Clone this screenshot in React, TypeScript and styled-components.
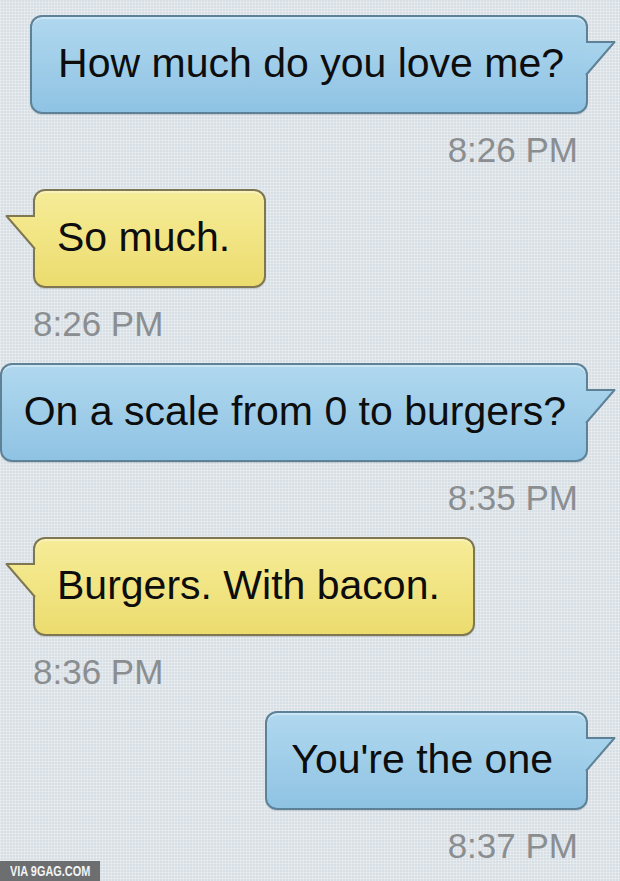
import React from "react";
import styled, { createGlobalStyle, css } from "styled-components";

const Global = createGlobalStyle`
  html, body { margin: 0; padding: 0; }
  body {
    width: 620px;
    height: 881px;
    overflow: hidden;
    background: #d7dfe5;
  }
`;

type Side = "left" | "right";

const palette = {
  right: {
    top: "#b0d8ef",
    bottom: "#8fc3e3",
    border: "#5d8298",
  },
  left: {
    top: "#f6ec98",
    bottom: "#ecdc6e",
    border: "#7f7752",
  },
};

const Screen = styled.div`
  position: relative;
  width: 620px;
  height: 881px;
  box-sizing: border-box;
  padding-top: 15px;
  overflow: hidden;
  font-family: "Liberation Sans", Arial, sans-serif;
  background-color: #d7dfe5;
  background-image:
    linear-gradient(90deg, rgba(255, 255, 255, 0.28) 1px, transparent 1px),
    linear-gradient(0deg, rgba(255, 255, 255, 0.28) 1px, transparent 1px);
  background-size: 3px 3px;
  display: flex;
  flex-direction: column;
`;

const Message = styled.div<{ $side: Side }>`
  display: flex;
  flex-direction: column;
  align-items: ${(p) => (p.$side === "right" ? "flex-end" : "flex-start")};
  padding: ${(p) => (p.$side === "right" ? "0 32px 0 0" : "0 0 0 33px")};
  margin-bottom: 19px;
`;

const Bubble = styled.div<{ $side: Side; $padL: number; $padR: number }>`
  position: relative;
  box-sizing: border-box;
  height: 99px;
  display: flex;
  align-items: center;
  padding: 0 ${(p) => p.$padR}px 3px ${(p) => p.$padL}px;
  border: 2px solid ${(p) => palette[p.$side].border};
  border-radius: 12px;
  background: linear-gradient(
    180deg,
    ${(p) => palette[p.$side].top} 0%,
    ${(p) => palette[p.$side].bottom} 100%
  );
  box-shadow: inset 0 2px 0 rgba(255, 255, 255, 0.35),
    0 1px 1px rgba(0, 0, 0, 0.12);
  color: #0d0d0d;
  font-size: 41px;
  line-height: 1;
  white-space: nowrap;
`;

const Tail = styled.svg<{ $side: Side }>`
  position: absolute;
  top: 22px;
  width: 32px;
  height: 38px;
  overflow: visible;
  ${(p) =>
    p.$side === "right"
      ? css`
          right: -31px;
        `
      : css`
          left: -31px;
          transform: scaleX(-1);
        `}
`;

const Time = styled.div<{ $side: Side }>`
  margin-top: 16px;
  height: 40px;
  line-height: 40px;
  font-size: 35px;
  color: #8b8e91;
  padding-right: ${(p) => (p.$side === "right" ? "10px" : "0")};
`;

const Watermark = styled.div`
  position: absolute;
  left: 0;
  bottom: 0;
  width: 100px;
  height: 20px;
  background: #6c6e70;
  color: #f4f4f4;
  font-family: "Liberation Sans Narrow", "Liberation Sans", Arial, sans-serif;
  font-weight: bold;
  font-size: 14px;
  line-height: 20px;
  white-space: nowrap;
  display: flex;
  align-items: center;
  padding-left: 10px;
  box-sizing: border-box;
`;

const WatermarkText = styled.span`
  display: inline-block;
  transform: scaleX(0.78);
  transform-origin: left center;
`;

function BubbleTail({ side }: { side: Side }) {
  const c = palette[side];
  const gid = `tail-${side}`;
  return (
    <Tail $side={side} viewBox="0 0 32 38">
      <defs>
        <linearGradient id={gid} x1="0" y1="-22" x2="0" y2="77" gradientUnits="userSpaceOnUse">
          <stop offset="0" stopColor={c.top} />
          <stop offset="1" stopColor={c.bottom} />
        </linearGradient>
      </defs>
      <path d="M0 2 H30 L2 36 H0 Z" fill={`url(#${gid})`} />
      <path
        d="M1 3 H29.5 L1 36"
        fill="none"
        stroke={c.border}
        strokeWidth="2"
        strokeLinejoin="round"
      />
    </Tail>
  );
}

type Msg = { side: Side; text: string; time: string; padL: number; padR: number };

const messages: Msg[] = [
  { side: "right", text: "How much do you love me?", time: "8:26 PM", padL: 26, padR: 22 },
  { side: "left", text: "So much.", time: "8:26 PM", padL: 22, padR: 34 },
  { side: "right", text: "On a scale from 0 to burgers?", time: "8:35 PM", padL: 22, padR: 20 },
  { side: "left", text: "Burgers. With bacon.", time: "8:36 PM", padL: 22, padR: 33 },
  { side: "right", text: "You're the one", time: "8:37 PM", padL: 24, padR: 33 },
];

export default function App() {
  return (
    <>
      <Global />
      <Screen>
        {messages.map((m, i) => (
          <Message key={i} $side={m.side}>
            <Bubble $side={m.side} $padL={m.padL} $padR={m.padR}>
              {m.text}
              <BubbleTail side={m.side} />
            </Bubble>
            <Time $side={m.side}>{m.time}</Time>
          </Message>
        ))}
        <Watermark>
          <WatermarkText>VIA 9GAG.COM</WatermarkText>
        </Watermark>
      </Screen>
    </>
  );
}
